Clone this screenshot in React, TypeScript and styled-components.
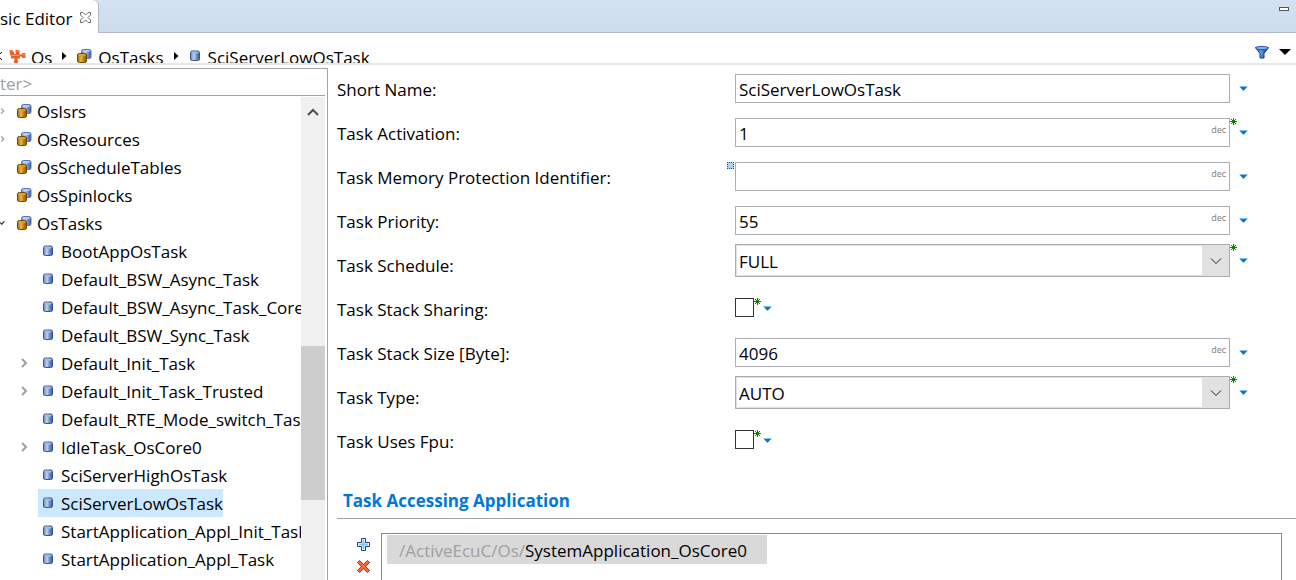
import React, { useState } from "react";
import styled, { createGlobalStyle } from "styled-components";

const GlobalStyle = createGlobalStyle`
  *, *::before, *::after { box-sizing: border-box; }
  body {
    margin: 0;
    background: #fff;
    color: #000;
    font: 17px/28px "Open Sans", "Noto Sans", sans-serif;
  }
  button, input, select { font: inherit; color: inherit; }
  button { padding: 0; border: 0; background: none; }
`;

const Editor = styled.div`
  display: flex;
  flex-direction: column;
  height: 100vh;
  overflow: hidden;
`;

const TabBar = styled.header`
  display: flex;
  justify-content: space-between;
  height: 33px;
  flex: none;
  background: linear-gradient(#d3e2f1, #cddded);
  border-bottom: 1px solid #b0b5cf;
`;

const Tab = styled.div`
  display: flex;
  gap: 8px;
  height: 33px;
  width: 99px;
  padding-top: 5px;
  background: #fff;
  border-right: 1px solid #b0b5cf;
  border-top-right-radius: 6px;
  white-space: nowrap;
`;

const TabTitle = styled.span`
  flex: none;
  line-height: 28px;
`;

const TabClose = styled.button`
  display: flex;
  padding-top: 7px;
  align-items: flex-start;
`;

const MinimizeButton = styled.button`
  display: flex;
  align-items: flex-start;
  padding: 7px 7px 0 0;
`;

const PathBar = styled.nav`
  display: flex;
  justify-content: space-between;
  height: 32px;
  flex: none;
  overflow: hidden;
  border-bottom: 2px solid #e8e8e8;
`;

const Path = styled.div`
  display: flex;
  align-items: flex-start;
  padding-top: 10px;
  white-space: nowrap;
`;

const PathIcon = styled.span<{ $width: number }>`
  display: flex;
  align-items: center;
  width: ${(p) => p.$width}px;
  height: 26px;
`;

const PathSeparator = styled.span`
  display: flex;
  align-items: center;
  width: 25px;
  height: 26px;
  padding-left: 10px;
`;

const PathLink = styled.a`
  padding-top: 1px;
  color: inherit;
  text-decoration: none;
`;

const PathTools = styled.div`
  display: flex;
  align-items: flex-start;
  gap: 10px;
  padding: 11px 5px 0 0;

  button { display: flex; height: 16px; align-items: center; }
`;

const Body = styled.div`
  display: flex;
  flex: 1;
  min-height: 0;
`;

const Side = styled.aside`
  display: flex;
  flex-direction: column;
  flex: none;
  width: 328px;
  margin-top: 3px;
  padding-right: 2px;
  border-top: 1px solid #a3a3a6;
  border-right: 1px solid #a3a3a6;
`;

const FilterInput = styled.input`
  width: 100%;
  height: 27px;
  flex: none;
  padding: 3px 0 0;
  border: 0;
  border-bottom: 1px solid #a3a3a6;
  outline: none;

  &::placeholder { color: #a0a0a0; opacity: 1; }
`;

const TreeArea = styled.div`
  display: flex;
  flex: 1;
  min-height: 0;
  padding-top: 1px;
`;

const Tree = styled.ul`
  flex: 1;
  min-width: 0;
  margin: 0;
  padding: 0;
  overflow: hidden;
  list-style: none;
`;

const TreeRow = styled.li<{ $level: number }>`
  display: flex;
  height: 28px;
  padding-left: ${(p) => (p.$level ? 18 : 0)}px;
`;

const Twisty = styled.button<{ $level: number }>`
  display: flex;
  flex: none;
  align-items: center;
  width: ${(p) => (p.$level ? 20 : 12)}px;
  justify-content: ${(p) => (p.$level ? "flex-start" : "flex-end")};
  padding-right: ${(p) => (p.$level ? 0 : 7)}px;
  padding-left: ${(p) => (p.$level ? 2 : 0)}px;
`;

const TreeItem = styled.button<{ $selected: boolean; $level: number }>`
  display: flex;
  flex: none;
  align-items: center;
  padding: 0 0 0 ${(p) => (p.$level ? 4 : 5)}px;
  background: ${(p) => (p.$selected ? "#cce8ff" : "transparent")};
  white-space: nowrap;
`;

const TreeIcon = styled.span<{ $level: number }>`
  display: flex;
  width: ${(p) => (p.$level ? 19 : 20)}px;
`;

const TreeText = styled.span`
  padding-top: 2px;
`;

const ScrollTrack = styled.div`
  display: flex;
  flex-direction: column;
  flex: none;
  width: 24px;
  background: #f0f0f0;
`;

const ScrollUp = styled.button`
  display: flex;
  justify-content: center;
  align-items: center;
  height: 30px;
  flex: none;
`;

const ScrollSpace = styled.div<{ $grow: number }>`
  flex: ${(p) => p.$grow} 1 0;
`;

const ScrollThumb = styled(ScrollSpace)`
  background: #cdcdcd;
`;

const Main = styled.main`
  display: flex;
  flex-direction: column;
  flex: 1;
  min-width: 0;
  padding: 2px 0 0 9px;
`;

const Form = styled.form`
  flex: none;
`;

const FormRow = styled.div`
  display: flex;
  height: 44px;
`;

const FieldLabel = styled.label`
  flex: none;
  width: 390px;
  padding-top: 9px;
`;

const topFor = { text: 7, combo: 1, check: 11 };

const FieldArea = styled.div<{ $kind: keyof typeof topFor }>`
  display: flex;
  flex: 1;
  min-width: 0;
  align-items: flex-start;
  padding: ${(p) => topFor[p.$kind]}px 48px 0 0;
`;

const Marker = styled.span`
  display: flex;
  flex: none;
  width: 8px;
`;

const Box = styled.div`
  position: relative;
  display: flex;
  flex: 1;
  min-width: 0;
`;

const TextInput = styled.input`
  width: 100%;
  height: 29px;
  padding: 2px 40px 0 3px;
  border: 1px solid #abadb3;
  background: #fff;
  outline: none;
`;

const UnitTag = styled.span`
  position: absolute;
  top: 5px;
  right: 4px;
  color: #7d7d7d;
  font-size: 9px;
  line-height: 14px;
`;

const Combo = styled.select`
  appearance: none;
  width: 100%;
  height: 33px;
  padding: 2px 30px 0 3px;
  border: 1px solid #acacac;
  border-radius: 0;
  box-shadow: inset 0 0 0 1px #e1e1e1;
  background: #fff;
  outline: none;
`;

const ComboArrow = styled.span`
  position: absolute;
  top: 1px;
  right: 1px;
  bottom: 1px;
  display: flex;
  justify-content: center;
  align-items: center;
  width: 27px;
  background: #e1e1e1;
  pointer-events: none;
`;

const Check = styled.input`
  appearance: none;
  width: 19px;
  height: 19px;
  margin: 0;
  border: 1px solid #333;
  background: #fff;

  &:checked { background: #333; box-shadow: inset 0 0 0 3px #fff; }
`;

const MenuButton = styled.button<{ $kind: keyof typeof topFor }>`
  display: flex;
  flex: none;
  align-items: center;
  height: ${(p) => (p.$kind === "combo" ? 33 : p.$kind === "text" ? 29 : 21)}px;
  padding-left: ${(p) => (p.$kind === "check" ? 1 : 0)}px;
`;

const MenuSlot = styled.div`
  display: flex;
  flex: none;
  justify-content: center;
  width: 10px;
`;

const SectionTitle = styled.h2`
  flex: none;
  margin: 0;
  padding: 24px 0 3px 6px;
  border-bottom: 1px solid #a0a0a0;
  color: #0078d7;
  font-size: 17px;
  font-weight: 700;
  line-height: 28px;
`;

const References = styled.section`
  display: flex;
  flex: 1;
  min-height: 0;
  padding: 14px 14px 0 20px;
`;

const Tools = styled.div`
  display: flex;
  flex-direction: column;
  flex: none;
  gap: 9px;
  width: 24px;
  padding-top: 5px;

  button { display: flex; }
`;

const ReferenceList = styled.ul`
  flex: 1;
  margin: 0;
  padding: 1px 5px;
  border: 1px solid #828790;
  border-bottom: 0;
  list-style: none;
`;

const Reference = styled.li`
  width: fit-content;
  height: 29px;
  padding: 2px 20px 0 12px;
  background: #d9d9d9;
  white-space: nowrap;
`;

const Muted = styled.span`
  color: #a0a0a0;
`;

const Gradients = () => (
  <svg width="0" height="0" style={{ position: "absolute" }} aria-hidden="true">
    <defs>
      <linearGradient id="blueBody">
        <stop offset="0" stopColor="#6684b8" />
        <stop offset="0.4" stopColor="#bcd3f2" />
        <stop offset="0.65" stopColor="#7194ce" />
        <stop offset="1" stopColor="#3b5998" />
      </linearGradient>
      <linearGradient id="goldBody">
        <stop offset="0" stopColor="#a36c0c" />
        <stop offset="0.4" stopColor="#e8b644" />
        <stop offset="0.65" stopColor="#c08410" />
        <stop offset="1" stopColor="#8a5700" />
      </linearGradient>
      <linearGradient id="funnelBody">
        <stop offset="0" stopColor="#1c3fa8" />
        <stop offset="0.4" stopColor="#5aa0e0" />
        <stop offset="1" stopColor="#101c80" />
      </linearGradient>
    </defs>
  </svg>
);

const CylinderIcon = () => (
  <svg width="12" height="12" viewBox="0 0 12 12">
    <path d="M1.500 2.500Q1.500 1 3.500 1H8.500Q10.500 1 10.500 2.500V9Q10.500 10.500 8.500 10.500H3.500Q1.500 10.500 1.500 9Z" fill="url(#blueBody)" stroke="#40547f" />
    <ellipse cx="6" cy="2.600" rx="3.800" ry="1.100" fill="#9ebce6" />
  </svg>
);

const GroupIcon = () => (
  <svg width="15" height="15" viewBox="0 0 15 15">
    <path d="M4.500 2Q4.500 .5 6.500 .5H12Q14 .5 14 2V8Q14 9.500 12 9.500H6.500Q4.500 9.500 4.500 8Z" fill="url(#blueBody)" stroke="#5a78b0" />
    <ellipse cx="9.300" cy="2.100" rx="4" ry="1.100" fill="#b4cdf0" />
    <path d="M.5 6Q.5 4.500 2.500 4.500H7.500Q9.500 4.500 9.500 6V12Q9.500 13.500 7.500 13.500H2.500Q.5 13.500 .5 12Z" fill="url(#goldBody)" stroke="#734a04" />
    <ellipse cx="5" cy="6.200" rx="3.700" ry="1.100" fill="#d9a534" />
  </svg>
);

const PuzzleIcon = () => (
  <svg width="17" height="15" viewBox="0 0 17 15">
    <path d="M.5 1H3.500L4.500 3H5V5H7V3H6.500V1H10.500V5.500H12.500L13.500 4H16.500V9H13.500L12.500 7.500H11V9.500H8.500V11.500H9V14.500H5V11.500H5.500V9.500H2V7Q1.500 6 1 5.500Z" fill="#e8622c" />
    <path d="M1.500 2H3M8 2H10M2.500 6.500H10M14 5.500H16" stroke="#f7a070" fill="none" />
  </svg>
);

const CloseIcon = () => (
  <svg width="11" height="11" viewBox="0 0 11 11" fill="#fff" stroke="#6e6e6e">
    <path d="M.5 .5H3L5.500 3L8 .5H10.500V3L8 5.500L10.500 8V10.500H8L5.500 8L3 10.500H.5V8L3 5.500L.5 3Z" />
  </svg>
);

const FunnelIcon = () => (
  <svg width="14" height="13" viewBox="0 0 14 13">
    <path d="M.5 1.500L5 7.500V12H9V7.500L13.500 1.500Z" fill="url(#funnelBody)" stroke="#1b2f94" />
    <ellipse cx="7" cy="2" rx="6.400" ry="1.600" fill="#7fb4ea" stroke="#2c50b4" />
  </svg>
);

const PathArrow = () => (
  <svg width="5" height="8" viewBox="0 0 5 8"><path d="M0 0L4.500 4L0 8Z" fill="#000" /></svg>
);

const SpareIcon = () => (
  <svg width="7" height="7" viewBox="0 0 7 7">
    <rect width="7" height="7" fill="#a9d2fa" />
    <path d="M0 .5H7M0 6.500H7M.5 0V7M6.500 0V7" stroke="#0b55a8" strokeDasharray="1 1" />
  </svg>
);

const StarIcon = () => (
  <svg width="7" height="7" viewBox="0 0 7 7" stroke="#107c10" fill="none">
    <path d="M3.500 0V7M0 3.500H7M1 1L6 6M6 1L1 6" />
  </svg>
);

const DropIcon = () => (
  <svg width="9" height="5" viewBox="0 0 9 5">
    <path d="M0 0H9L8 1.500H1Z" fill="#83c0f2" />
    <path d="M1 1H8L5 4.500H4Z" fill="#0078d7" />
  </svg>
);

const Chevron = ({ d, w, h, color, weight }: { d: string; w: number; h: number; color: string; weight: number }) => (
  <svg width={w} height={h} viewBox={`0 0 ${w} ${h}`} fill="none" stroke={color} strokeWidth={weight}>
    <path d={d} />
  </svg>
);

const PlusIcon = () => (
  <svg width="13" height="13" viewBox="0 0 13 13">
    <path d="M4.500 .5H8.500V4.500H12.500V8.500H8.500V12.500H4.500V8.500H.5V4.500H4.500Z" fill="#fff" stroke="#1f3f86" />
    <path d="M6.500 2V11M2 6.500H11" stroke="#7cc8f2" strokeWidth="2" />
  </svg>
);

const DeleteIcon = () => (
  <svg width="13" height="13" viewBox="0 0 13 13">
    <path d="M.5 2.500L2.500 .5L6.500 4.300L10.500 .5L12.500 2.500L8.700 6.500L12.500 10.500L10.500 12.500L6.500 8.700L2.500 12.500L.5 10.500L4.300 6.500Z" fill="#f56a3c" stroke="#b02a12" />
  </svg>
);

type Node = { name: string; level: number; twisty?: "open" | "closed" };

const nodes: Node[] = [
  { name: "OsIsrs", level: 0, twisty: "closed" },
  { name: "OsResources", level: 0, twisty: "closed" },
  { name: "OsScheduleTables", level: 0 },
  { name: "OsSpinlocks", level: 0 },
  { name: "OsTasks", level: 0, twisty: "open" },
  { name: "BootAppOsTask", level: 1 },
  { name: "Default_BSW_Async_Task", level: 1 },
  { name: "Default_BSW_Async_Task_Core", level: 1 },
  { name: "Default_BSW_Sync_Task", level: 1 },
  { name: "Default_Init_Task", level: 1, twisty: "closed" },
  { name: "Default_Init_Task_Trusted", level: 1, twisty: "closed" },
  { name: "Default_RTE_Mode_switch_Task", level: 1 },
  { name: "IdleTask_OsCore0", level: 1, twisty: "closed" },
  { name: "SciServerHighOsTask", level: 1 },
  { name: "SciServerLowOsTask", level: 1 },
  { name: "StartApplication_Appl_Init_Task", level: 1 },
  { name: "StartApplication_Appl_Task", level: 1 },
];

type Field = {
  id: string;
  label: string;
  kind: "text" | "combo" | "check";
  value?: string;
  unit?: boolean;
  star?: boolean;
  spare?: boolean;
};

const fields: Field[] = [
  { id: "name", label: "Short Name:", kind: "text", value: "SciServerLowOsTask" },
  { id: "activation", label: "Task Activation:", kind: "text", value: "1", unit: true, star: true },
  { id: "memory", label: "Task Memory Protection Identifier:", kind: "text", value: "", unit: true, spare: true },
  { id: "priority", label: "Task Priority:", kind: "text", value: "55", unit: true },
  { id: "schedule", label: "Task Schedule:", kind: "combo", value: "FULL", star: true },
  { id: "sharing", label: "Task Stack Sharing:", kind: "check", star: true },
  { id: "stack", label: "Task Stack Size [Byte]:", kind: "text", value: "4096", unit: true },
  { id: "type", label: "Task Type:", kind: "combo", value: "AUTO", star: true },
  { id: "fpu", label: "Task Uses Fpu:", kind: "check", star: true },
];

const FieldRow = ({ field }: { field: Field }) => {
  const { id, label, kind, value, unit, star, spare } = field;
  const menu = (
    <MenuButton type="button" $kind={kind} aria-label={`${label} options`}>
      <DropIcon />
    </MenuButton>
  );
  return (
    <FormRow>
      <FieldLabel htmlFor={id}>{label}</FieldLabel>
      <FieldArea $kind={kind}>
        <Marker>{spare && <SpareIcon />}</Marker>
        {kind === "text" && (
          <Box>
            <TextInput id={id} type="text" defaultValue={value} />
            {unit && <UnitTag>dec</UnitTag>}
          </Box>
        )}
        {kind === "combo" && (
          <Box>
            <Combo id={id} defaultValue={value}>
              <option>{value}</option>
            </Combo>
            <ComboArrow>
              <Chevron w={12} h={8} d="M1 1.500L6 6.500L11 1.500" color="#222" weight={1} />
            </ComboArrow>
          </Box>
        )}
        {kind === "check" && <Check id={id} type="checkbox" />}
        <Marker>{star && <StarIcon />}</Marker>
        {kind === "check" ? menu : <MenuSlot>{menu}</MenuSlot>}
      </FieldArea>
    </FormRow>
  );
};

export default function App() {
  const [selected, setSelected] = useState("SciServerLowOsTask");
  return (
    <Editor>
      <GlobalStyle />
      <Gradients />
      <TabBar>
        <Tab>
          <TabTitle>sic Editor</TabTitle>
          <TabClose aria-label="Close"><CloseIcon /></TabClose>
        </Tab>
        <MinimizeButton aria-label="Minimize">
          <svg width="10" height="4" viewBox="0 0 10 4"><rect x=".5" y=".5" width="9" height="3" fill="#fff" stroke="#555" /></svg>
        </MinimizeButton>
      </TabBar>
      <PathBar>
        <Path>
          <PathIcon $width={9}>
            <Chevron w={3} h={10} d="M-2 5L2 1M-2 5L2 9" color="#222" weight={1} />
          </PathIcon>
          <PathIcon $width={22}><PuzzleIcon /></PathIcon>
          <PathLink href="#os">Os</PathLink>
          <PathSeparator><PathArrow /></PathSeparator>
          <PathIcon $width={21}><GroupIcon /></PathIcon>
          <PathLink href="#tasks">OsTasks</PathLink>
          <PathSeparator><PathArrow /></PathSeparator>
          <PathIcon $width={19}><CylinderIcon /></PathIcon>
          <PathLink href="#task">SciServerLowOsTask</PathLink>
        </Path>
        <PathTools>
          <button aria-label="Filter"><FunnelIcon /></button>
          <button aria-label="View menu">
            <svg width="12" height="6" viewBox="0 0 12 6"><path d="M0 0H12L6 6Z" fill="#000" /></svg>
          </button>
        </PathTools>
      </PathBar>
      <Body>
        <Side>
          <FilterInput type="text" placeholder="ter>" aria-label="Filter" />
          <TreeArea>
            <Tree>
              {nodes.map((n) => (
                <TreeRow key={n.name} $level={n.level}>
                  <Twisty $level={n.level} aria-label="Toggle">
                    {n.twisty === "closed" && (
                      <Chevron w={8} h={10} d="M2 1L6 5L2 9" color="#a0a0a0" weight={2} />
                    )}
                    {n.twisty === "open" && (
                      <Chevron w={8} h={8} d="M0 3L3 6L7 1" color="#404040" weight={2} />
                    )}
                  </Twisty>
                  <TreeItem
                    $level={n.level}
                    $selected={n.name === selected}
                    onClick={() => setSelected(n.name)}
                  >
                    <TreeIcon $level={n.level}>{n.level ? <CylinderIcon /> : <GroupIcon />}</TreeIcon>
                    <TreeText>{n.name}</TreeText>
                  </TreeItem>
                </TreeRow>
              ))}
            </Tree>
            <ScrollTrack>
              <ScrollUp aria-label="Scroll up">
                <Chevron w={14} h={10} d="M2 8L7 3L12 8" color="#505050" weight={2} />
              </ScrollUp>
              <ScrollSpace $grow={219} />
              <ScrollThumb $grow={154} />
              <ScrollSpace $grow={80} />
            </ScrollTrack>
          </TreeArea>
        </Side>
        <Main>
          <Form>
            {fields.map((f) => <FieldRow key={f.id} field={f} />)}
          </Form>
          <SectionTitle>Task Accessing Application</SectionTitle>
          <References>
            <Tools>
              <button aria-label="Add"><PlusIcon /></button>
              <button aria-label="Remove"><DeleteIcon /></button>
            </Tools>
            <ReferenceList>
              <Reference><Muted>/ActiveEcuC/Os/</Muted>SystemApplication_OsCore0</Reference>
            </ReferenceList>
          </References>
        </Main>
      </Body>
    </Editor>
  );
}
